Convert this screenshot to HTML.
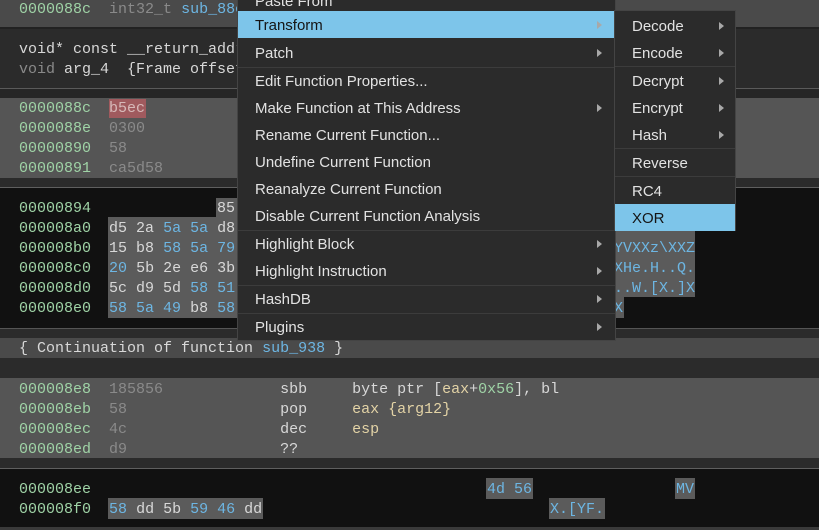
<!DOCTYPE html>
<html><head><meta charset="utf-8"><style>
*{margin:0;padding:0;box-sizing:border-box}
body{width:819px;height:530px;overflow:hidden;background:#111;position:relative;font-family:"Liberation Mono",monospace;font-size:15px}
.b{position:absolute;left:0;width:819px}
.t{position:absolute;line-height:20px;white-space:pre;color:#d4d4d4}
.a{color:#9fd3a6}.g{color:#8a8a8a}.bl{color:#6db6e3}.y{color:#e3d3a6}.w{color:#d8d8d8}.pk{color:#d7b9b9}
.hb{position:absolute;background:#5b5b5b}
.menu{position:absolute;background:#2b2b2b;border:1px solid #444;font-family:"Liberation Sans",sans-serif;font-size:15px;color:#e2e2e2}
.mi{position:absolute;left:0;right:0;height:27px;line-height:29px;padding-left:17px}
.sel{background:#7dc5ea;color:#151515}
.sep{position:absolute;left:0;right:0;height:1px;background:#3c3c3c}
.ar{position:absolute;width:0;height:0;border-top:4px solid transparent;border-bottom:4px solid transparent;border-left:5px solid #a8a8a8;top:10px}
</style></head><body>
<div class="b" style="top:0;height:27px;background:#4a4a4a"></div>
<div class="b" style="top:27px;height:2px;background:#222"></div>
<div class="b" style="top:29px;height:59px;background:#2b2b2b"></div>
<div class="b" style="top:88px;height:1px;background:#5a5a5a"></div>
<div class="b" style="top:89px;height:9px;background:#262626"></div>
<div class="b" style="top:98px;height:80px;background:#555"></div>
<div class="b" style="top:178px;height:9px;background:#2b2b2b"></div>
<div class="b" style="top:187px;height:1px;background:#5f5f5f"></div>
<div class="b" style="top:328px;height:1px;background:#555"></div>
<div class="b" style="top:329px;height:9px;background:#2b2b2b"></div>
<div class="b" style="top:338px;height:20px;background:#4a4a4a"></div>
<div class="b" style="top:358px;height:20px;background:#2b2b2b"></div>
<div class="b" style="top:378px;height:80px;background:#555"></div>
<div class="b" style="top:458px;height:10px;background:#2b2b2b"></div>
<div class="b" style="top:468px;height:1px;background:#5f5f5f"></div>
<div class="b" style="top:527px;height:3px;background:#3a3a3a"></div>

<div class="t" style="left:19px;top:0px"><span class="a">0000088c</span>  <span class="g">int32_t</span> <span class="bl">sub_88c</span></div>
<div class="t" style="left:19px;top:40px"><span class="w">void* const __return_addr</span></div>
<div class="t" style="left:19px;top:60px"><span class="g">void</span> <span class="w">arg_4  {Frame offset</span></div>

<div style="position:absolute;left:109px;top:99px;width:37px;height:19px;background:#a05a5e"></div>
<div class="t" style="left:19px;top:99px"><span class="a">0000088c</span>  <span class="pk">b5ec</span></div>
<div class="t" style="left:19px;top:119px"><span class="a">0000088e</span>  <span class="g">0300</span></div>
<div class="t" style="left:19px;top:139px"><span class="a">00000890</span>  <span class="g">58</span></div>
<div class="t" style="left:19px;top:159px"><span class="a">00000891</span>  <span class="g">ca5d58</span></div>

<div class="hb" style="left:216px;top:198px;width:30px;height:20px"></div>
<div class="hb" style="left:108px;top:217px;width:138px;height:101px"></div>
<div class="hb" style="left:612px;top:217px;width:83px;height:80px"></div>
<div class="hb" style="left:612px;top:297px;width:12px;height:21px"></div>
<div class="t" style="left:19px;top:199px"><span class="a">00000894</span>              <span class="w">85</span></div>
<div class="t" style="left:19px;top:219px"><span class="a">000008a0</span>  <span class="w">d5 2a</span> <span class="bl">5a 5a</span> <span class="w">d8</span></div>
<div class="t" style="left:19px;top:239px"><span class="a">000008b0</span>  <span class="w">15 b8</span> <span class="bl">58 5a 79</span></div>
<div class="t" style="left:19px;top:259px"><span class="a">000008c0</span>  <span class="bl">20</span> <span class="w">5b 2e e6 3b</span></div>
<div class="t" style="left:19px;top:279px"><span class="a">000008d0</span>  <span class="w">5c d9 5d</span> <span class="bl">58 51</span></div>
<div class="t" style="left:19px;top:299px"><span class="a">000008e0</span>  <span class="bl">58 5a 49</span> <span class="w">b8</span> <span class="bl">58</span></div>
<div class="t bl" style="left:614px;top:239px">YVXXz\XXZ</div>
<div class="t bl" style="left:614px;top:259px">XHe.H..Q.</div>
<div class="t bl" style="left:614px;top:279px">..W.[X.]X</div>
<div class="t bl" style="left:614px;top:299px">X</div>

<div class="t" style="left:19px;top:339px"><span class="w">{ Continuation of function</span> <span class="bl">sub_938</span> <span class="w">}</span></div>
<div class="t" style="left:19px;top:380px"><span class="a">000008e8</span>  <span class="g">185856</span>             <span class="w">sbb</span>     <span class="w">byte ptr [</span><span class="y">eax</span><span class="w">+</span><span class="a">0x56</span><span class="w">], bl</span></div>
<div class="t" style="left:19px;top:400px"><span class="a">000008eb</span>  <span class="g">58</span>                 <span class="w">pop</span>     <span class="y">eax {arg12}</span></div>
<div class="t" style="left:19px;top:420px"><span class="a">000008ec</span>  <span class="g">4c</span>                 <span class="w">dec</span>     <span class="y">esp</span></div>
<div class="t" style="left:19px;top:440px"><span class="a">000008ed</span>  <span class="g">d9</span>                 <span class="w">??</span></div>

<div class="hb" style="left:486px;top:478px;width:47px;height:21px"></div>
<div class="hb" style="left:675px;top:478px;width:20px;height:21px"></div>
<div class="hb" style="left:108px;top:498px;width:155px;height:21px"></div>
<div class="hb" style="left:549px;top:498px;width:56px;height:21px"></div>
<div class="t" style="left:19px;top:480px"><span class="a">000008ee</span></div>
<div class="t bl" style="left:487px;top:480px">4d 56</div>
<div class="t bl" style="left:676px;top:480px">MV</div>
<div class="t" style="left:19px;top:500px"><span class="a">000008f0</span>  <span class="bl">58</span> <span class="w">dd 5b</span> <span class="bl">59 46</span> <span class="w">dd</span></div>
<div class="t bl" style="left:550px;top:500px">X.[YF.</div>

<div class="menu" style="left:237px;top:-4px;width:379px;height:345px">
 <div class="mi" style="top:-10px">Paste From</div>
 <div class="mi sel" style="top:14px">Transform<i class="ar" style="left:359px"></i></div>
 <div class="mi" style="top:42px">Patch<i class="ar" style="left:359px"></i></div>
 <div class="sep" style="top:70px"></div>
 <div class="mi" style="top:70px">Edit Function Properties...</div>
 <div class="mi" style="top:97px">Make Function at This Address<i class="ar" style="left:359px"></i></div>
 <div class="mi" style="top:124px">Rename Current Function...</div>
 <div class="mi" style="top:151px">Undefine Current Function</div>
 <div class="mi" style="top:178px">Reanalyze Current Function</div>
 <div class="mi" style="top:205px">Disable Current Function Analysis</div>
 <div class="sep" style="top:233px"></div>
 <div class="mi" style="top:233px">Highlight Block<i class="ar" style="left:359px"></i></div>
 <div class="mi" style="top:260px">Highlight Instruction<i class="ar" style="left:359px"></i></div>
 <div class="sep" style="top:288px"></div>
 <div class="mi" style="top:288px">HashDB<i class="ar" style="left:359px"></i></div>
 <div class="sep" style="top:316px"></div>
 <div class="mi" style="top:316px">Plugins<i class="ar" style="left:359px"></i></div>
</div>

<div class="menu" style="left:614px;top:10px;width:122px;height:221px">
 <div class="mi" style="top:1px">Decode<i class="ar" style="left:104px"></i></div>
 <div class="mi" style="top:28px">Encode<i class="ar" style="left:104px"></i></div>
 <div class="sep" style="top:55px"></div>
 <div class="mi" style="top:56px">Decrypt<i class="ar" style="left:104px"></i></div>
 <div class="mi" style="top:83px">Encrypt<i class="ar" style="left:104px"></i></div>
 <div class="mi" style="top:110px">Hash<i class="ar" style="left:104px"></i></div>
 <div class="sep" style="top:137px"></div>
 <div class="mi" style="top:138px">Reverse</div>
 <div class="sep" style="top:165px"></div>
 <div class="mi" style="top:166px">RC4</div>
 <div class="mi sel" style="top:193px">XOR</div>
</div>
</body></html>
